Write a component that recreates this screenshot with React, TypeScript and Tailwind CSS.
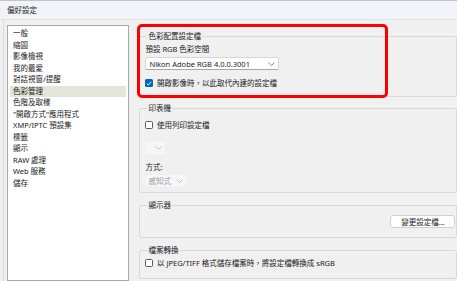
import React from 'react';

const listItems = [
  '一般',
  '縮圖',
  '影像檢視',
  '我的最愛',
  '對話視窗/提醒',
  '色彩管理',
  '色階及取樣',
  '"開啟方式"應用程式',
  'XMP/IPTC 預設集',
  '標籤',
  '顯示',
  'RAW 處理',
  'Web 服務',
  '儲存',
];

const Chevron = ({ color = '#6b6b6b' }: { color?: string }) => (
  <svg width="7" height="4" viewBox="0 0 7 4" fill="none">
    <path d="M0.5 0.5 L3.5 3.5 L6.5 0.5" stroke={color} strokeWidth="0.8" />
  </svg>
);

const Check = ({ checked = false }: { checked?: boolean }) =>
  checked ? (
    <span className="w-[8px] h-[8px] rounded-[1.5px] bg-[#0067c0] flex items-center justify-center shrink-0">
      <svg width="6" height="5" viewBox="0 0 6 5" fill="none">
        <path d="M0.7 2.5 L2.3 4 L5.3 0.8" stroke="white" strokeWidth="1" />
      </svg>
    </span>
  ) : (
    <span className="w-[8px] h-[8px] rounded-[1.5px] border border-[#5a5a5a] bg-white shrink-0" />
  );

const Group = ({ title, className, children }: { title: string; className: string; children?: React.ReactNode }) => (
  <fieldset className={`border border-[#d9d9d9] rounded-[2px] pl-[5px] ${className}`}>
    <legend className="ml-[2px] px-[1px] leading-[10px] text-[#1a1a1a]">{title}</legend>
    {children}
  </fieldset>
);

const App = () => {
  return (
    <div
      className="relative w-[457px] h-[281px] overflow-hidden bg-[#f0f0f0] text-[7.5px] text-[#1a1a1a]"
      style={{ fontFamily: '"Noto Sans", "Noto Sans CJK TC", sans-serif' }}
    >
      {/* title bar */}
      <div className="h-[20px] bg-[#f1f3f8] border-t border-[#c4c4c4] border-b border-b-[#e4e4e4] flex items-center pl-[7px] leading-[10px]">
        偏好設定
      </div>

      <div className="flex h-[261px] border-l border-[#dadada] ml-[3px]">
        {/* category list */}
        <div className="mt-[5px] ml-[3px] w-[127px] bg-white border border-[#a8a8a8] pt-[2px] px-[2px]">
          {listItems.map((item, i) => (
            <div
              key={item}
              className={`h-[11.5px] leading-[11.5px] pl-[3px] ${i === 5 ? 'bg-[#e4e4d8]' : ''}`}
            >
              {item}
            </div>
          ))}
        </div>

        {/* settings */}
        <div className="ml-[10px] w-[330px] pt-[11px] flex flex-col">
          <Group title="色彩配置設定檔" className="h-[66px]">
            <div className="mt-[3px] leading-[10px]">預設 RGB 色彩空間</div>
            <div className="mt-[3px] w-[134px] h-[13px] bg-white border border-[#d6d6d6] border-b-[#a8a8a8] rounded-[2px] flex items-center justify-between pl-[3px] pr-[3px]">
              <span className="leading-[10px]">Nikon Adobe RGB 4.0.0.3001</span>
              <Chevron />
            </div>
            <div className="mt-[8px] flex items-center gap-[3.5px] leading-[10px]">
              <Check checked />
              <span>開啟影像時，以此取代內建的設定檔</span>
            </div>
          </Group>

          <Group title="印表機" className="h-[90px] mt-[6px]">
            <div className="mt-[7px] flex items-center gap-[3.5px] leading-[10px]">
              <Check />
              <span>使用列印設定檔</span>
            </div>
            <div className="mt-[12px] w-[20px] h-[12px] bg-[#f6f6f6] rounded-[2px] flex items-center justify-end pr-[3px]">
              <Chevron color="#b4b4b4" />
            </div>
            <div className="mt-[8px] leading-[10px]">方式:</div>
            <div className="mt-[3px] w-[41px] h-[11px] bg-[#f6f6f6] rounded-[2px] flex items-center justify-between pl-[3px] pr-[3px] text-[#a0a0a0]">
              <span className="leading-[10px]">感知式</span>
              <Chevron color="#b4b4b4" />
            </div>
          </Group>

          <Group title="顯示器" className="h-[38px] mt-[7px]">
            <div className="mt-[5px] flex">
              <button className="ml-[245px] w-[65px] h-[13px] bg-white border border-[#d0d0d0] rounded-[3px] leading-[10px] text-[#1a1a1a]">
                變更設定檔...
              </button>
            </div>
          </Group>

          <Group title="檔案轉換" className="h-[34px] mt-[7px]">
            <div className="mt-[3px] flex items-center gap-[3.5px] leading-[10px]">
              <Check />
              <span>以 JPEG/TIFF 格式儲存檔案時，將設定檔轉換成 sRGB</span>
            </div>
          </Group>
        </div>
      </div>

      {/* red annotation frame */}
      <div className="absolute left-[137px] top-[24px] w-[251px] h-[74px] border-[3px] border-[#ff0000] rounded-[5px]" />
    </div>
  );
};

export default App;
